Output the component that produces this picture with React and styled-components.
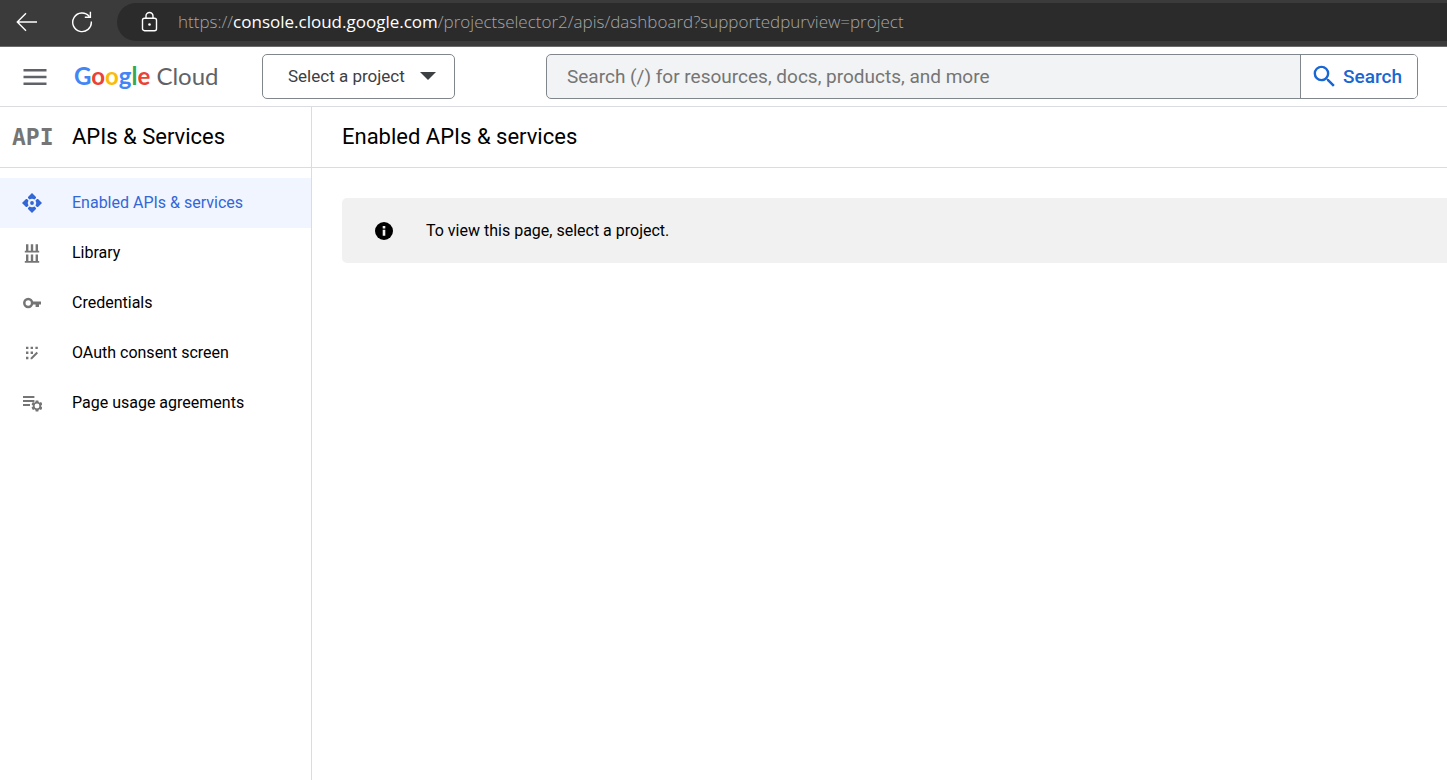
import React from "react";
import styled, { createGlobalStyle } from "styled-components";
import { MdSearch, MdSettings } from "react-icons/md";

const GlobalStyle = createGlobalStyle`
  *, *::before, *::after { box-sizing: border-box; }
  body { margin: 0; background: #fff; color: #000; font-family: Roboto, "Liberation Sans", sans-serif; font-size: 16px; line-height: 24px; }
  button, input { font: inherit; color: inherit; }
  svg { display: block; flex: none; }
`;

const Page = styled.div`
  display: flex;
  flex-direction: column;
  min-height: 100vh;
  overflow-x: hidden;
`;

const BrowserBar = styled.header`
  display: flex;
  align-items: stretch;
  height: 47px;
  padding: 3px 0 5px;
  background: #3b3b3b;
  border-bottom: 1px solid #6b6b6b;
`;

const IconButton = styled.button`
  display: flex;
  align-items: center;
  justify-content: center;
  width: ${(p) => p.$width}px;
  padding: 0;
  border: 0;
  background: none;
  color: ${(p) => p.$color};
`;

const AddressBar = styled.div`
  display: flex;
  flex: 1;
  align-items: center;
  min-width: 0;
  margin-left: 8px;
  padding-left: 4px;
  border-radius: 19px 0 0 19px;
  background: #2b2b2b;
`;

const Url = styled.span`
  color: #a6a6a6;
  font: 300 17px/24px "Open Sans", "Noto Sans", sans-serif;
  white-space: nowrap;
`;

const Host = styled.span`
  color: #fff;
  font-weight: 400;
`;

const ConsoleBar = styled.header`
  display: flex;
  align-items: center;
  height: 60px;
  padding-right: 29px;
  border-bottom: 1px solid #dadce0;
`;

const LogoLink = styled.a`
  flex: none;
  width: 192px;
  padding: 0 0 2px 4px;
  color: #5f6368;
  font: 24px/32px Lato, sans-serif;
  text-decoration: none;
  white-space: nowrap;
`;

const Letter = styled.span`
  color: ${(p) => p.$color};
  font-weight: 700;
`;

const ProjectButton = styled.button`
  display: flex;
  flex: none;
  align-items: center;
  justify-content: space-between;
  width: 193px;
  height: 45px;
  padding: 0 18px 2px 25px;
  border: 1px solid #80868b;
  border-radius: 5px;
  background: #fff;
  color: #3c4043;
  font-size: 17px;
  font-weight: 400;
`;

const SearchForm = styled.form`
  display: flex;
  flex: 1;
  height: 45px;
  min-width: 0;
  margin-left: 91px;
  border: 1px solid #80868b;
  border-radius: 5px;
  background: #f1f3f4;
  overflow: hidden;
`;

const SearchInput = styled.input`
  flex: 1;
  min-width: 0;
  padding: 0 20px;
  border: 0;
  background: none;
  font-size: 19px;
  &::placeholder { color: #757575; opacity: 1; }
`;

const SearchButton = styled.button`
  display: flex;
  align-items: center;
  gap: 4px;
  padding: 0 15px 0 9px;
  border: 0;
  border-left: 1px solid #80868b;
  background: #fff;
  color: #1967d2;
  font-size: 19px;
  font-weight: 500;
`;

const Body = styled.div`
  display: flex;
  flex: 1;
`;

const Sidebar = styled.aside`
  width: 312px;
  flex: none;
  border-right: 1px solid #dadce0;
`;

const SectionHeader = styled.div`
  display: flex;
  align-items: center;
  height: 61px;
  padding-left: ${(p) => p.$inset}px;
  border-bottom: 1px solid #dadce0;
`;

const Title = styled.h2`
  margin: 0;
  font-size: 22px;
  font-weight: 400;
  line-height: 32px;
`;

const ApiMark = styled.span`
  width: 60px;
  color: #757575;
  font: 700 23px/32px "DejaVu Sans Mono", monospace;
`;

const NavList = styled.ul`
  margin: 0;
  padding: 10px 0;
  list-style: none;
`;

const NavLink = styled.a`
  display: flex;
  align-items: center;
  height: 50px;
  color: ${(p) => (p.$active ? "#3367d6" : "#000")};
  background: ${(p) => (p.$active ? "#f0f5ff" : "none")};
  text-decoration: none;
`;

const NavIcon = styled.span`
  display: flex;
  justify-content: center;
  width: 64px;
  margin-right: 8px;
  color: ${(p) => (p.$active ? "#3367d6" : "#757575")};
`;

const Main = styled.main`
  flex: 1;
  min-width: 0;
`;

const Notice = styled.div`
  display: flex;
  align-items: center;
  gap: 33px;
  height: 65px;
  margin: 30px 0 0 30px;
  padding-left: 33px;
  border-radius: 5px 0 0 5px;
  background: #f1f1f1;
`;

const BackIcon = () => (
  <svg width="22" height="20" viewBox="0 0 22 20" fill="none" stroke="currentColor" strokeWidth="1.4">
    <path d="M21 10H1.5M10 1.2 1.3 10l8.7 8.8" />
  </svg>
);

const ReloadIcon = () => (
  <svg width="22" height="22" viewBox="0 0 22 22" fill="none" stroke="currentColor" strokeWidth="1.4">
    <path d="M20.3 10.5A9.3 9.3 0 1 1 18.2 5.4M19.4.8v5.4h-5.6" />
  </svg>
);

const LockIcon = () => (
  <svg width="17" height="22" viewBox="0 0 17 22" fill="none" stroke="currentColor" strokeWidth="1.4">
    <rect x="1.5" y="7.2" width="14" height="12.5" rx="2" />
    <path d="M5 7.2V5a3.5 3.5 0 0 1 7 0v2.2" />
    <circle cx="8.5" cy="13.5" r="1.3" fill="currentColor" stroke="none" />
  </svg>
);

const MenuIcon = () => (
  <svg width="24" height="16" viewBox="0 0 24 16" fill="currentColor">
    <path d="M.5 0h23v2.5H.5zM.5 6.8h23v2.5H.5zM.5 13.5h23V16H.5z" />
  </svg>
);

const CaretIcon = () => (
  <svg width="16" height="8" viewBox="0 0 16 8" fill="currentColor">
    <path d="M0 0h16L8 8z" />
  </svg>
);

const DashboardIcon = () => (
  <svg width="20" height="20" viewBox="0 0 20 20" fill="currentColor">
    <circle cx="10" cy="10" r="1.9" />
    {[0, 90, 180, 270].map((angle) => (
      <path key={angle} transform={`rotate(${angle} 10 10)`} d="M10 0 14 4v1L12.5 6.5Q10 4.9 7.5 6.5L6 5V4z" />
    ))}
  </svg>
);

const LibraryIcon = () => (
  <svg width="16" height="20" viewBox="0 0 16 20" fill="currentColor">
    <path d="M.8 7.8h14.4v1.6H.8zM2 1.3h2.4v7H2zM6.8 1.3h2.4v7H6.8zM11.6 1.3H14v7h-2.4zM.8 18h14.4v1.7H.8zM2 11.6h2.4v7H2zM6.8 11.6h2.4v7H6.8zM11.6 11.6H14v7h-2.4z" />
  </svg>
);

const KeyIcon = () => (
  <svg width="18" height="12" viewBox="0 0 18 12" fill="currentColor">
    <circle cx="5.2" cy="6" r="3.9" fill="none" stroke="currentColor" strokeWidth="2.5" />
    <path d="M9 4.6h9v2.8h-2V10h-3.4V7.4H9z" />
  </svg>
);

const ConsentIcon = () => (
  <svg width="14" height="14" viewBox="0 0 14 14" fill="currentColor">
    <path d="M1 .7h2.4v2.4H1zM5.6.7H8v2.4H5.6zM10.4.7h2.4v2.4h-2.4zM1 5.6h2.4V8H1zM5.6 5.6H8V8H5.6zM1 10.8h2.4v2.4H1zM5.6 11.8l6-6 1.4 1.4-6 6H5.6z" />
  </svg>
);

const AgreementsIcon = () => (
  <svg width="20" height="20" viewBox="0 0 20 20" fill="currentColor">
    <path d="M1 3h11.4v2H1zM1 7h11.4v2H1zM1 11h7v2H1z" />
    <MdSettings x="8" y="6" size={14} />
    <circle cx="15" cy="13" r="2.4" fill="#fff" />
  </svg>
);

const InfoIcon = () => (
  <svg width="18" height="18" viewBox="0 0 18 18">
    <circle cx="9" cy="9" r="9" fill="#000" />
    <path d="M7.7 4h2.6v2.4H7.7zM7.7 7.8h2.6v6H7.7z" fill="#f1f1f1" />
  </svg>
);

const navItems = [
  { label: "Enabled APIs & services", icon: <DashboardIcon />, active: true },
  { label: "Library", icon: <LibraryIcon /> },
  { label: "Credentials", icon: <KeyIcon /> },
  { label: "OAuth consent screen", icon: <ConsentIcon /> },
  { label: "Page usage agreements", icon: <AgreementsIcon /> },
];

const brand = [
  ["G", "#4285f4"],
  ["o", "#ea4335"],
  ["o", "#fbbc04"],
  ["g", "#4285f4"],
  ["l", "#34a853"],
  ["e", "#ea4335"],
];

export default function App() {
  return (
    <Page>
      <GlobalStyle />
      <BrowserBar>
        <IconButton $width={54} $color="#fff" aria-label="Back"><BackIcon /></IconButton>
        <IconButton $width={55} $color="#fff" aria-label="Reload"><ReloadIcon /></IconButton>
        <AddressBar>
          <IconButton $width={57} $color="#fff" aria-label="Site information"><LockIcon /></IconButton>
          <Url>https://<Host>console.cloud.google.com</Host>/projectselector2/apis/dashboard?supportedpurview=project</Url>
        </AddressBar>
      </BrowserBar>
      <ConsoleBar>
        <IconButton $width={70} $color="#5f6368" aria-label="Main menu"><MenuIcon /></IconButton>
        <LogoLink href="#home">
          {brand.map(([letter, color], i) => <Letter key={i} $color={color}>{letter}</Letter>)} Cloud
        </LogoLink>
        <ProjectButton>Select a project<CaretIcon /></ProjectButton>
        <SearchForm role="search">
          <SearchInput type="search" aria-label="Search" placeholder="Search (/) for resources, docs, products, and more" />
          <SearchButton type="button"><MdSearch size={29} />Search</SearchButton>
        </SearchForm>
      </ConsoleBar>
      <Body>
        <Sidebar>
          <SectionHeader $inset={12}>
            <ApiMark>API</ApiMark>
            <Title>APIs &amp; Services</Title>
          </SectionHeader>
          <nav aria-label="APIs and services">
            <NavList>
              {navItems.map((item) => (
                <li key={item.label}>
                  <NavLink href="#nav" $active={item.active}>
                    <NavIcon $active={item.active}>{item.icon}</NavIcon>
                    {item.label}
                  </NavLink>
                </li>
              ))}
            </NavList>
          </nav>
        </Sidebar>
        <Main>
          <SectionHeader $inset={30}><Title as="h1">Enabled APIs &amp; services</Title></SectionHeader>
          <Notice role="status"><InfoIcon />To view this page, select a project.</Notice>
        </Main>
      </Body>
    </Page>
  );
}
